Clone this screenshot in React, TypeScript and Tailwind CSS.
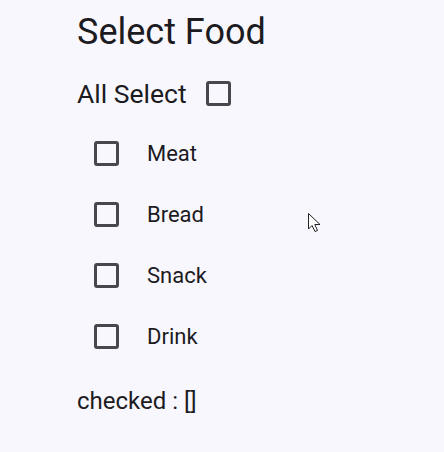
import React from "react";

const Box = () => (
  <div className="w-[25px] h-[25px] border-[3px] border-[#48464e] rounded-[3px] shrink-0" />
);

export default function App() {
  const items = ["Meat", "Bread", "Snack", "Drink"];
  return (
    <div
      className="relative w-[444px] h-[452px] bg-[#f8f7fd] text-[#1c1b1f] overflow-hidden"
      style={{ fontFamily: "Roboto, 'Noto Sans', sans-serif" }}
    >
      <div className="flex flex-col pl-[77px] pt-[10px]">
        <div className="h-[44px] leading-[44px] text-[36px]">Select Food</div>
        <div className="mt-[10px] h-[59px] flex items-center">
          <span className="text-[26.5px] leading-[30px]">All Select</span>
          <div className="ml-[19px]">
            <Box />
          </div>
        </div>
        <div className="flex flex-col pl-[17px]">
          {items.map((it) => (
            <div key={it} className="h-[61px] flex items-center">
              <Box />
              <span className="ml-[28px] text-[22px] leading-[26px]">{it}</span>
            </div>
          ))}
        </div>
        <div className="mt-[20px] text-[24px] leading-[28px]">checked : []</div>
      </div>
      <svg
        className="absolute left-[307px] top-[212px]"
        width="16"
        height="22"
        viewBox="0 0 16 22"
      >
        <path
          d="M1.5 1.5 L1.5 17 L5 13.5 L8 19.5 L10.5 18.5 L7.8 12.5 L13 12.5 Z"
          fill="#fff"
          stroke="#222"
          strokeWidth="1"
          strokeLinejoin="round"
        />
      </svg>
    </div>
  );
}
